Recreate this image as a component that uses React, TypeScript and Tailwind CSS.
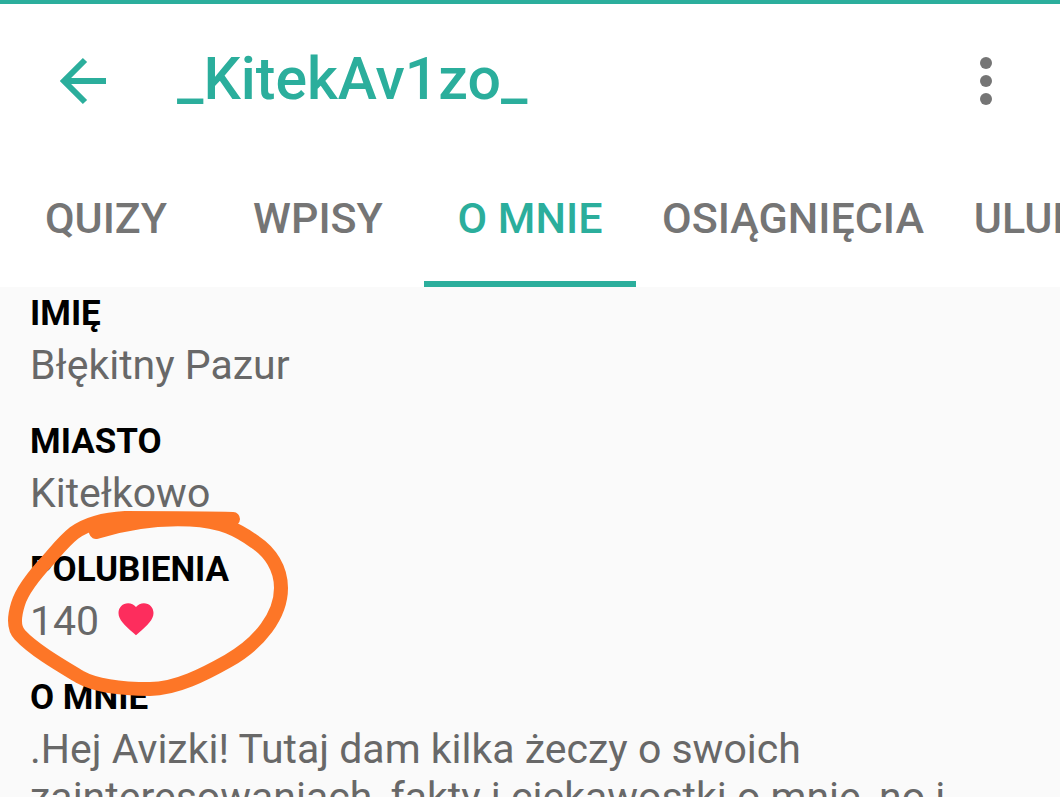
import React, { useState } from "react";

const tabs = [
    { label: "QUIZY", width: "w-[212px]" },
    { label: "WPISY", width: "w-[212px]" },
    { label: "O MNIE", width: "w-[212px]" },
    { label: "OSIĄGNIĘCIA", width: "w-[314px]" },
    { label: "ULUBIONE", width: "w-[250px]" },
];

const about =
    ".Hej Avizki! Tutaj dam kilka żeczy o swoich zainteresowaniach, fakty i ciekawostki o mnie, no i";

function Field({ label, children }: { label: string; children: React.ReactNode }) {
    return (
        <div className="mb-[29px]">
            <dt className="mb-[3px] text-[35px] leading-[48px] font-bold text-black">{label}</dt>
            <dd className="text-[41px] leading-[48px] text-[#686868]">{children}</dd>
        </div>
    );
}

export default function App() {
    const [active, setActive] = useState("O MNIE");

    return (
        <div className="flex h-screen flex-col overflow-hidden bg-[#fafafa] font-['Roboto',sans-serif]">
            <header className="shrink-0 border-t-4 border-[#2bae9c] bg-white">
                <div className="flex h-[154px] items-center pl-[59px] pr-[67px]">
                    <button type="button" aria-label="Wstecz" className="mr-[70px] text-[#2bae9c]">
                        <svg width="48" height="48" viewBox="0 0 48 48" fill="none" stroke="currentColor" strokeWidth="6">
                            <path d="M47 24H5M26 3L5 24l21 21" />
                        </svg>
                    </button>
                    <h1 className="flex-1 pb-[3px] text-[59px] font-medium text-[#2bae9c]">_KitekAv1zo_</h1>
                    <button type="button" aria-label="Menu">
                        <svg width="14" height="48" viewBox="0 0 14 48" fill="#757575">
                            <circle cx="7" cy="6" r="6" />
                            <circle cx="7" cy="24" r="6" />
                            <circle cx="7" cy="42" r="6" />
                        </svg>
                    </button>
                </div>
                <nav className="flex h-[129px] overflow-hidden">
                    {tabs.map((tab) => (
                        <button
                            key={tab.label}
                            type="button"
                            onClick={() => setActive(tab.label)}
                            className={`${tab.width} shrink-0 border-b-6 pb-[3px] text-[43px] font-medium ${
                                active === tab.label
                                    ? "border-[#2bae9c] text-[#2bae9c]"
                                    : "border-transparent text-[#757575]"
                            }`}
                        >
                            {tab.label}
                        </button>
                    ))}
                </nav>
            </header>

            <main className="relative px-[30px] pt-[3px]">
                <dl>
                    <Field label="IMIĘ">Błękitny Pazur</Field>
                    <Field label="MIASTO">Kitełkowo</Field>
                    <Field label="POLUBIENIA">
                        <span className="flex items-center gap-4">
                            140
                            <svg className="mb-1" width="42" height="42" viewBox="0 0 24 24" fill="#fd2d5d" aria-hidden="true">
                                <path d="M12 21.35l-1.45-1.32C5.4 15.36 2 12.28 2 8.5 2 5.42 4.42 3 7.5 3c1.74 0 3.41.81 4.5 2.09C13.09 3.81 14.76 3 16.5 3 19.58 3 22 5.42 22 8.5c0 3.78-3.4 6.86-8.55 11.54L12 21.35z" />
                            </svg>
                        </span>
                    </Field>
                    <Field label="O MNIE">{about}</Field>
                </dl>
                {/* hand-drawn ring around the likes */}
                <svg
                    className="pointer-events-none absolute left-0 top-[213px]"
                    width="300"
                    height="200"
                    viewBox="0 500 300 200"
                    fill="none"
                    stroke="#fd7627"
                    strokeWidth="14"
                    strokeLinecap="round"
                    strokeLinejoin="round"
                    aria-hidden="true"
                >
                    <path d="M233 519C205 518 150 518 125 518C105 519 88 523 74 533C64 541 57 550 50 558C36 573 22 590 18 604C14 617 13 628 20 635C34 650 60 665 80 677C98 687 125 689 150 689C176 689 205 674 228 661C260 643 281 615 281 588C281 568 270 552 255 542C238 530 222 521 190 519.5C158 518 128 522 96 532" />
                </svg>
            </main>
        </div>
    );
}
